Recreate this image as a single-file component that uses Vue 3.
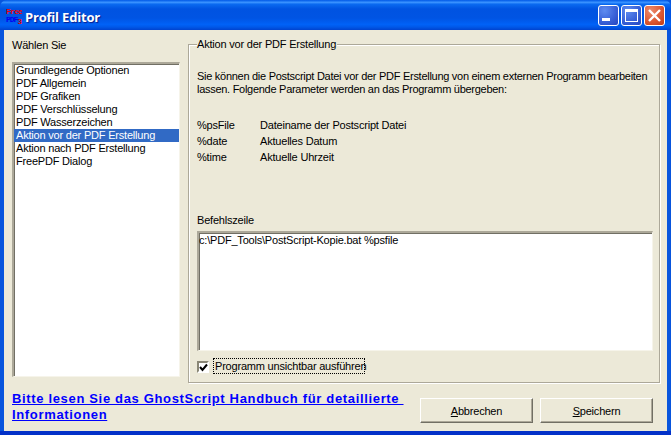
<script setup>
const items = [
  'Grundlegende Optionen', 'PDF Allgemein', 'PDF Grafiken', 'PDF Verschlüsselung',
  'PDF Wasserzeichen', 'Aktion vor der PDF Erstellung', 'Aktion nach PDF Erstellung', 'FreePDF Dialog'
]
const params = [
  ['%psFile', 'Dateiname der Postscript Datei'],
  ['%date', 'Aktuelles Datum'],
  ['%time', 'Aktuelle Uhrzeit']
]
</script>

<template>
  <div class="window">
    <header class="titlebar">
      <svg class="app-icon" width="17" height="18" viewBox="0 0 17 18">
        <text x="1" y="6.5" class="ic-red">Free</text>
        <text x="1" y="14.5" class="ic-blue">PDF</text>
        <text x="12.5" y="17" class="ic-red">3</text>
      </svg>
      <span class="title">Profil Editor</span>
      <div class="controls">
        <div class="ctl blue">
          <svg width="21" height="21" viewBox="0 0 21 21"><rect x="4" y="13" width="8" height="3" fill="#fff" /></svg>
        </div>
        <div class="ctl blue">
          <svg width="21" height="21" viewBox="0 0 21 21"><rect x="4.5" y="4.5" width="12" height="12" fill="none" stroke="#fff" /><rect x="4" y="4" width="13" height="3" fill="#fff" /></svg>
        </div>
        <div class="ctl red">
          <svg width="21" height="21" viewBox="0 0 21 21"><path d="M5 5l11 11M16 5L5 16" stroke="#fff" stroke-width="2.4" fill="none" /></svg>
        </div>
      </div>
    </header>

    <main class="client">
      <div class="top">
        <section class="left">
          <div class="left-label">Wählen Sie</div>
          <ul class="list sunken">
            <li v-for="(it, i) in items" :key="it" :class="{ sel: i === 5 }">{{ it }}</li>
          </ul>
        </section>

        <section class="group">
          <div class="legend">Aktion vor der PDF Erstellung</div>
          <p class="intro">Sie können die Postscript Datei vor der PDF Erstellung von einem externen Programm bearbeiten<br>lassen. Folgende Parameter werden an das Programm übergeben:</p>
          <div class="params">
            <template v-for="p in params" :key="p[0]">
              <span>{{ p[0] }}</span><span>{{ p[1] }}</span>
            </template>
          </div>
          <div class="spacer"></div>
          <div class="cmd-label">Befehlszeile</div>
          <div class="cmd sunken">c:\PDF_Tools\PostScript-Kopie.bat %psfile</div>
          <div class="check-row">
            <span class="check">
              <svg width="9" height="9" viewBox="0 0 9 9"><path d="M1 4l2.5 3L8 1.5" stroke="#000" stroke-width="2" fill="none" /></svg>
            </span>
            <span class="check-label">Programm unsichtbar ausführen</span>
          </div>
        </section>
      </div>

      <div class="bottom">
        <a class="link" href="#">Bitte lesen Sie das GhostScript Handbuch für detaillierte&nbsp; Informationen</a>
        <div class="buttons">
          <button class="btn"><u>A</u>bbrechen</button>
          <button class="btn"><u>S</u>peichern</button>
        </div>
      </div>
    </main>
  </div>
</template>

<style>
html, body { margin: 0; padding: 0; background: #0855dd; }
</style>

<style scoped>
* { box-sizing: border-box; }
.window {
  width: 671px;
  height: 435px;
  display: flex;
  flex-direction: column;
  font: 11px/13px "Liberation Sans", Arial, sans-serif;
  letter-spacing: -0.2px;
  color: #000;
  overflow: hidden;
  background: linear-gradient(180deg, #0855dd 0, #0855dd 431px, #0331c8 431px);
}
.titlebar {
  height: 30px;
  flex: none;
  display: flex;
  align-items: center;
  padding: 1px 6px 0 5px;
  border-radius: 7px 7px 0 0;
  background: linear-gradient(180deg, #0058e6 0%, #3a93ff 8%, #0a6af0 14%, #0053e1 30%, #0054e3 60%, #0062f7 82%, #0058e8 90%, #0043cf 100%);
}
.app-icon { flex: none; margin-right: 3px; margin-top: 1px; }
.ic-red { font: bold 8px "Liberation Mono", monospace; letter-spacing: -0.7px; fill: #f00000; }
.ic-blue { font: bold 8px "Liberation Mono", monospace; letter-spacing: -1px; fill: #0000f0; }
.title {
  font: bold 13px "Open Sans", "Liberation Sans", sans-serif;
  letter-spacing: -0.2px;
  color: #fff;
  text-shadow: 1px 1px 1px #0a1f8f;
  margin-top: 2px;
}
.controls { margin-left: auto; display: flex; gap: 2px; margin-top: -1px; }
.ctl {
  width: 21px;
  height: 21px;
  border: 1px solid #fff;
  border-radius: 3px;
  display: flex;
  align-items: center;
  justify-content: center;
}
.ctl svg { margin: -1px; flex: none; }
.blue { background: radial-gradient(circle at 30% 25%, #5f8cf0, #3a62d8 55%, #2445c0); }
.red { background: radial-gradient(circle at 30% 25%, #ec8a6c, #dd5a34 55%, #c23a14); }
.client {
  flex: 1;
  margin: 0 4px 4px;
  background: #ece9d8;
  display: flex;
  flex-direction: column;
  padding: 8px 7px 0 8px;
  min-height: 0;
}
.top { display: flex; gap: 8px; height: 344px; flex: none; align-items: flex-start; }
.left { width: 168px; flex: none; display: flex; flex-direction: column; }
.left-label { height: 24px; padding-top: 1px; }
.sunken {
  border-style: solid;
  border-width: 2px 1px 1px 2px;
  border-color: #aca899 #f6f4ea #f6f4ea #aca899;
  box-shadow: inset 1px 1px 0 #716f64;
  background: #fff;
}
.list {
  list-style: none;
  margin: 0;
  padding: 0;
  height: 315px;
}
.list li { height: 13px; padding-left: 2px; white-space: nowrap; }
.list li.sel { background: #316ac5; color: #fff; }
.group {
  position: relative;
  width: 472px;
  height: 339px;
  margin-top: 6px;
  padding: 25px 7px 0 8px;
  border: 1px solid #aca899;
  box-shadow: 1px 1px 0 #fff, inset 1px 1px 0 #fff;
  display: flex;
  flex-direction: column;
}
.legend {
  position: absolute;
  top: -7px;
  left: 8px;
  padding: 0 1px 0 0;
  background: #ece9d8;
  white-space: nowrap;
}
.intro { margin: 0; line-height: 13px; white-space: nowrap; letter-spacing: -0.28px; }
.params {
  display: grid;
  grid-template-columns: 63px 1fr;
  row-gap: 3px;
  margin-top: 23px;
}
.spacer { height: 50px; }
.cmd-label { height: 17px; }
.cmd {
  width: 456px;
  height: 120px;
  padding: 1px 0;
  flex: none;
}
.check-row { display: flex; align-items: center; margin-top: 7px; height: 16px; }
.check {
  width: 12px;
  height: 12px;
  flex: none;
  border-style: solid;
  border-width: 2px;
  border-color: #8a8776 #fff #fff #8a8776;
  background: #fff;
  display: flex;
  align-items: center;
  justify-content: center;
  margin: 2px 4px 0 0;
}
.check svg { flex: none; margin: -1px; }
.check-label { border: 1px dotted #000; padding: 0 0 0 1px; height: 16px; width: 152px; white-space: nowrap; line-height: 14px; }
.bottom { flex: 1; display: flex; align-items: flex-start; min-height: 0; }
.link {
  width: 400px;
  font: bold 13px/16px "Liberation Sans", Arial, sans-serif;
  letter-spacing: 0.66px;
  color: #0000ff;
  margin-top: 9px;
}
.buttons { margin-left: auto; display: flex; gap: 7px; margin-top: 16px; padding-right: 7px; }
.btn {
  width: 113px;
  height: 25px;
  font: 11px "Liberation Sans", Arial, sans-serif;
  letter-spacing: -0.2px;
  background: #ece9d8;
  border: 1px solid;
  border-color: #fff #716f64 #716f64 #fff;
  box-shadow: inset -1px -1px 0 #aca899;
  padding: 0;
  color: #000;
}
</style>
